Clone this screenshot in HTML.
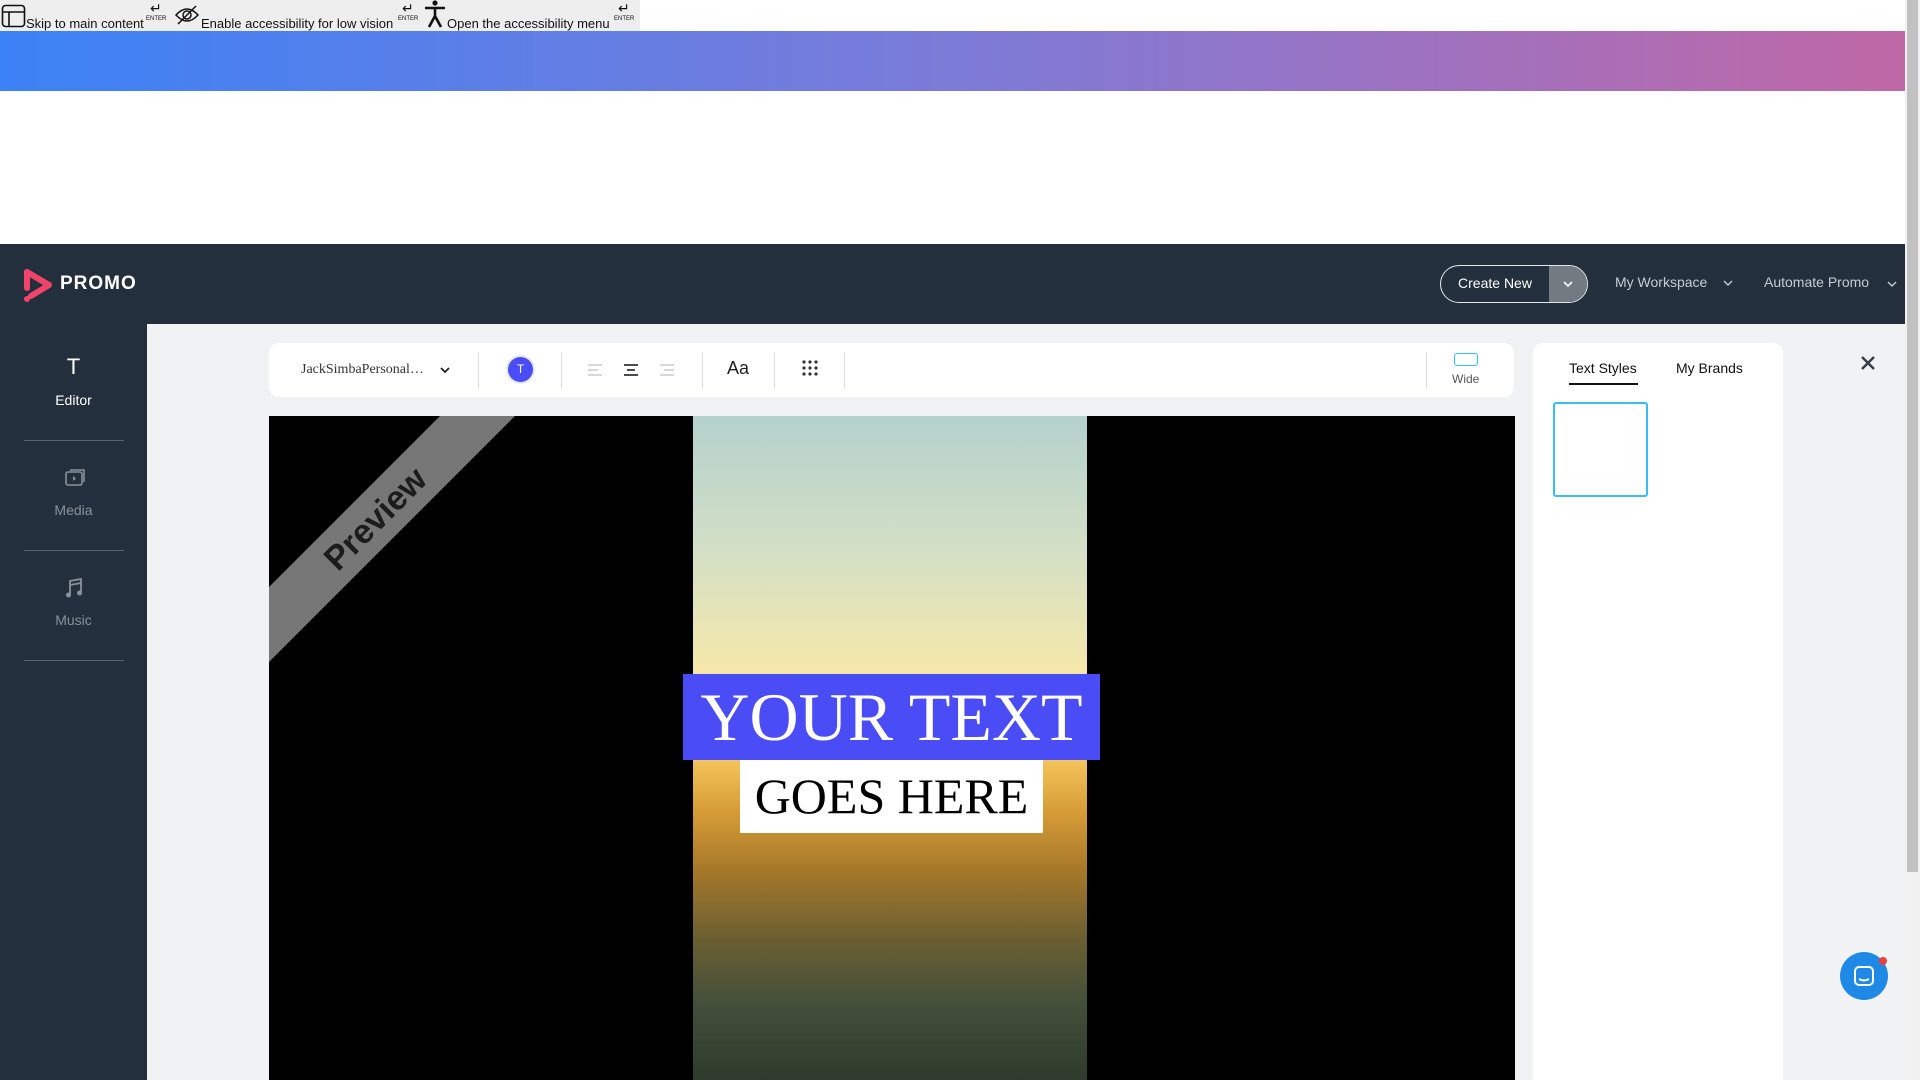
<!DOCTYPE html>
<html><head><meta charset="utf-8"><style>
*{box-sizing:border-box;margin:0;padding:0}
body{width:1920px;height:1080px;overflow:hidden;background:#fff;font-family:"Liberation Sans",sans-serif;position:relative}
.a{position:absolute}
</style></head><body>
<div class="a" style="left:0;top:0;width:640px;height:31px;background:#eeeeee;font-size:13px;color:#111">
 <svg class="a" style="left:1px;top:4px" width="25" height="24" viewBox="0 0 25 24"><rect x="1.5" y="1.5" width="22" height="21" rx="3" fill="none" stroke="#111" stroke-width="1.6"/><path d="M1.5 8H23.5M8 8V22.5" stroke="#111" stroke-width="1.6"/></svg>
 <span class="a" style="left:26px;top:16px">Skip to main content</span>
 <span class="a" style="left:146px;top:16px;font-size:6px">ENTER</span>
 <span class="a" style="left:150px;top:0;font-size:14px">↵</span>
 <svg class="a" style="left:174px;top:5px" width="26" height="20" viewBox="0 0 26 20"><path d="M2 10Q13 -2 24 10Q13 22 2 10Z" fill="none" stroke="#111" stroke-width="1.5"/><circle cx="13" cy="10" r="4" fill="none" stroke="#111" stroke-width="1.5"/><path d="M4 19L22 1" stroke="#111" stroke-width="1.5"/></svg>
 <span class="a" style="left:201px;top:16px">Enable accessibility for low vision</span>
 <span class="a" style="left:398px;top:16px;font-size:6px">ENTER</span>
 <span class="a" style="left:402px;top:0;font-size:14px">↵</span>
 <svg class="a" style="left:423px;top:0" width="24" height="28" viewBox="0 0 24 28"><circle cx="12" cy="3" r="2.6" fill="#111"/><path d="M2 8H22M12 8V16L6 27M12 16L18 27" stroke="#111" stroke-width="2.6" fill="none"/></svg>
 <span class="a" style="left:447px;top:16px">Open the accessibility menu</span>
 <span class="a" style="left:614px;top:16px;font-size:6px">ENTER</span>
 <span class="a" style="left:618px;top:0;font-size:14px">↵</span>
</div>
<div class="a" style="left:0;top:31px;width:1905px;height:60px;background:linear-gradient(90deg,#3b82f6,#7c7bd8 50%,#c068a6)"></div>
<div class="a" style="left:1905px;top:0;width:15px;height:1080px;background:#f1f1f1"></div>
<div class="a" style="left:1907px;top:0;width:11px;height:872px;background:#c1c1c1"></div>
<div class="a" style="left:0;top:244px;width:1905px;height:80px;background:#232f3c"></div>
<svg class="a" style="left:22px;top:268px" width="32" height="36" viewBox="0 0 32 36"><path d="M5 4L27 17L9 28" fill="none" stroke="#f2436b" stroke-width="6" stroke-linejoin="round" stroke-linecap="round"/><path d="M5 4V20" stroke="#f2436b" stroke-width="6" stroke-linecap="round"/><circle cx="5" cy="31" r="3" fill="#f2436b"/></svg>
<div class="a" style="left:60px;top:273px;color:#fff;font-size:19px;font-weight:bold;letter-spacing:1px">PROMO</div>
<div class="a" style="left:1440px;top:265px;width:148px;height:38px;border:1.5px solid #e5e7eb;border-radius:19px;overflow:hidden">
 <div class="a" style="left:0;top:0;width:108px;height:36px;color:#fff;font-size:14px;line-height:35px;text-align:center">Create New</div>
 <div class="a" style="left:108px;top:0;width:40px;height:36px;background:#737a81"></div>
 <svg class="a" style="left:121px;top:13px" width="12" height="10"><path d="M2 3L6 7L10 3" stroke="#fff" stroke-width="1.6" fill="none"/></svg>
</div>
<div class="a" style="left:1615px;top:274px;color:#c8ccd2;font-size:14px">My Workspace</div>
<svg class="a" style="left:1722px;top:278px" width="12" height="10"><path d="M2 3L6 7L10 3" stroke="#c8ccd2" stroke-width="1.4" fill="none"/></svg>
<div class="a" style="left:1764px;top:274px;color:#c8ccd2;font-size:14px">Automate Promo</div>
<svg class="a" style="left:1886px;top:279px" width="12" height="10"><path d="M2 3L6 7L10 3" stroke="#c8ccd2" stroke-width="1.4" fill="none"/></svg>
<div class="a" style="left:0;top:324px;width:147px;height:756px;background:#232f3c;color:#fff;font-size:14px;text-align:center">
 <div class="a" style="left:0;top:30px;width:147px;font-size:22px">T</div>
 <div class="a" style="left:0;top:68px;width:147px">Editor</div>
 <div class="a" style="left:24px;top:116px;width:100px;height:1px;background:#58616c"></div>
 <svg class="a" style="left:63px;top:142px" width="24" height="24" viewBox="0 0 24 24"><rect x="3" y="6" width="16" height="13" rx="2" fill="none" stroke="#8a919a" stroke-width="1.6"/><path d="M7 4H21V16" fill="none" stroke="#8a919a" stroke-width="1.6"/><path d="M10 10L13 12.5L10 15Z" fill="#8a919a"/></svg>
 <div class="a" style="left:0;top:178px;width:147px;color:#8a919a">Media</div>
 <div class="a" style="left:24px;top:226px;width:100px;height:1px;background:#58616c"></div>
 <svg class="a" style="left:63px;top:252px" width="24" height="24" viewBox="0 0 24 24"><path d="M7 19V5L18 3V17M7 9L18 7" fill="none" stroke="#8a919a" stroke-width="1.8"/><circle cx="5.5" cy="19" r="2.5" fill="#8a919a"/><circle cx="16.5" cy="17" r="2.5" fill="#8a919a"/></svg>
 <div class="a" style="left:0;top:288px;width:147px;color:#8a919a">Music</div>
 <div class="a" style="left:24px;top:336px;width:100px;height:1px;background:#58616c"></div>
</div>
<div class="a" style="left:147px;top:324px;width:1758px;height:756px;background:#f1f2f4"></div>
<div class="a" style="left:269px;top:343px;width:1245px;height:54px;background:#fff;border-radius:10px">
 <div class="a" style="left:32px;top:19px;font-family:'Liberation Serif',serif;font-size:14px;color:#333">JackSimbaPersonal…</div>
 <svg class="a" style="left:170px;top:22px" width="12" height="10"><path d="M2 3L6 7L10 3" stroke="#222" stroke-width="1.8" fill="none"/></svg>
 <div class="a" style="left:209px;top:10px;width:1px;height:36px;background:#ddd"></div>
 <div class="a" style="left:239px;top:14px;width:25px;height:25px;border-radius:50%;background:#4a4cf5;color:#fff;font-size:12px;line-height:25px;text-align:center;box-shadow:0 0 0 2px #e6e8f5">T</div>
 <div class="a" style="left:292px;top:10px;width:1px;height:36px;background:#ddd"></div>
 <svg class="a" style="left:318px;top:20px" width="90" height="14"><path d="M1 2H15M1 7H11M1 12H15" stroke="#c9cbd0" stroke-width="1.6"/><path d="M37 2H51M40 7H48M37 12H51" stroke="#333" stroke-width="1.8"/><path d="M73 2H87M77 7H87M73 12H87" stroke="#c9cbd0" stroke-width="1.6"/></svg>
 <div class="a" style="left:433px;top:10px;width:1px;height:36px;background:#ddd"></div>
 <div class="a" style="left:458px;top:15px;font-size:18px;color:#222">Aa</div>
 <div class="a" style="left:505px;top:10px;width:1px;height:36px;background:#ddd"></div>
 <svg class="a" style="left:532px;top:16px" width="18" height="18"><g fill="#333"><circle cx="3" cy="3" r="1.6"/><circle cx="9" cy="3" r="1.6"/><circle cx="15" cy="3" r="1.6"/><circle cx="3" cy="9" r="1.6"/><circle cx="9" cy="9" r="1.6"/><circle cx="15" cy="9" r="1.6"/><circle cx="3" cy="15" r="1.6"/><circle cx="9" cy="15" r="1.6"/><circle cx="15" cy="15" r="1.6"/></g></svg>
 <div class="a" style="left:575px;top:10px;width:1px;height:36px;background:#ddd"></div>
 <div class="a" style="left:1157px;top:10px;width:1px;height:36px;background:#ddd"></div>
 <div class="a" style="left:1185px;top:10px;width:24px;height:13px;border:1.5px solid #38bdf8;border-radius:3px"></div>
 <div class="a" style="left:1183px;top:29px;font-size:12px;color:#555">Wide</div>
</div>
<div class="a" style="left:269px;top:416px;width:1246px;height:664px;background:#000;overflow:hidden">
 <svg class="a" style="left:0;top:0" width="260" height="260"><polygon points="171,0 246,0 0,246 0,171" fill="#777"/></svg>
 <div class="a" style="left:27px;top:84px;width:160px;text-align:center;font-size:34px;font-weight:bold;color:#1c1c1c;transform:rotate(-45deg)">Preview</div>
 <div class="a" style="left:424px;top:0;width:394px;height:664px;background:linear-gradient(180deg,#b4d1cd 0%,#d3dfc6 20%,#f5e8aa 38%,#f8dd8f 48%,#f0be55 53%,#d49a35 60%,#a87a2a 68%,#6e6030 78%,#44503a 88%,#2e3a2c 100%)"></div>
</div>
<div class="a" style="left:683px;top:674px;width:417px;height:86px;background:#4a4cf5;color:#fff;font-family:'Liberation Serif',serif;font-size:68px;line-height:86px;text-align:center">YOUR TEXT</div>
<div class="a" style="left:740px;top:760px;width:303px;height:73px;background:#fff;color:#000;font-family:'Liberation Serif',serif;font-size:50px;line-height:73px;text-align:center">GOES HERE</div>
<div class="a" style="left:1533px;top:343px;width:250px;height:737px;background:#fff;border-radius:10px 10px 0 0">
 <div class="a" style="left:36px;top:17px;font-size:14px;color:#111">Text Styles</div>
 <div class="a" style="left:36px;top:40px;width:69px;height:2px;background:#111"></div>
 <div class="a" style="left:143px;top:17px;font-size:14px;color:#111">My Brands</div>
 <div class="a" style="left:20px;top:59px;width:95px;height:95px;border:2px solid #38bdf8;border-radius:3px"></div>
</div>
<svg class="a" style="left:1861px;top:356px" width="14" height="14"><path d="M1 1L13 13M13 1L1 13" stroke="#333d48" stroke-width="2.4"/></svg>
<div class="a" style="left:1840px;top:952px;width:48px;height:48px;border-radius:50%;background:#1f8ae6"></div>
<svg class="a" style="left:1853px;top:965px" width="22" height="22" viewBox="0 0 22 22"><rect x="2" y="2" width="18" height="18" rx="4" fill="none" stroke="#fff" stroke-width="2"/><path d="M6 14Q11 17 16 14" stroke="#fff" stroke-width="2" fill="none"/></svg>
<div class="a" style="left:1879px;top:957px;width:8px;height:8px;border-radius:50%;background:#f03e3e"></div>
</body></html>
